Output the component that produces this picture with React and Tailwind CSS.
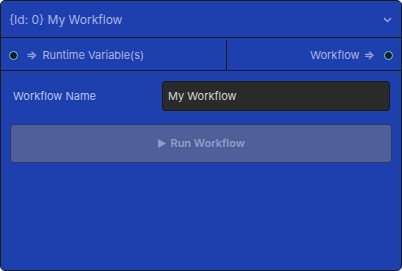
// Workflow node card
const Dot = ({ className = '' }) => (
  <span className={`block w-[9px] h-[9px] rounded-full bg-[#161a24] border-[1.5px] border-[#5fd3dc] shrink-0 ${className}`} />
)

const App = () => {
  return (
    <div
      className="w-[402px] h-[271px] bg-[#1e40af] border border-[#1b1c22] rounded-[5px] overflow-hidden flex flex-col"
      style={{ fontFamily: 'Inter, "Noto Sans", sans-serif' }}
    >
      {/* Header */}
      <div className="h-[37px] shrink-0 flex items-center justify-between pl-[8px] pr-[9px] pt-[2px] border-b border-[#1b1c22]">
        <span className="text-[12px] text-[#a9b4e0]">{'{Id: 0} My Workflow'}</span>
        <svg width="9" height="6" viewBox="0 0 9 6">
          <path d="M1 1.2 L4.5 4.5 L8 1.2" fill="none" stroke="#8f9fd8" strokeWidth="1.6" />
        </svg>
      </div>

      {/* Ports */}
      <div className="h-[33px] shrink-0 flex border-b border-[#1b1c22] pt-[2px]">
        <div className="w-[226px] flex items-center pl-[8px] border-r border-[#1b1c22]">
          <Dot />
          <span className="ml-[8px] text-[12px] font-bold text-[#8f9dd4]">⇒</span>
          <span className="ml-[5px] text-[11px] text-[#a9b4e0]">Runtime Variable(s)</span>
        </div>
        <div className="flex-1 flex items-center justify-end pr-[8px]">
          <span className="text-[11px] text-[#a9b4e0]">Workflow</span>
          <span className="ml-[4px] text-[12px] font-bold text-[#8f9dd4]">⇒</span>
          <Dot className="ml-[9px]" />
        </div>
      </div>

      {/* Body */}
      <div className="flex flex-col pt-[10px] px-[9px]">
        <div className="flex items-center justify-between pl-[3px] pr-[2px]">
          <span className="text-[11px] text-[#b6c0e6]">Workflow Name</span>
          <div className="w-[228px] h-[30px] bg-[#2a2a2a] border border-[#1a1a1a] rounded-[3px] flex items-center px-[5px]">
            <span className="text-[11px] text-[#d4d4d4]">My Workflow</span>
          </div>
        </div>
        <button className="mt-[13px] h-[39px] w-full bg-[#4f5f97] border border-[#2e3a66] rounded-[4px] flex items-center justify-center gap-[4px] text-[11px] font-semibold text-[#8f9cca]">
          <span className="text-[10px]">▶</span>
          <span>Run Workflow</span>
        </button>
      </div>
    </div>
  )
}

export default App
